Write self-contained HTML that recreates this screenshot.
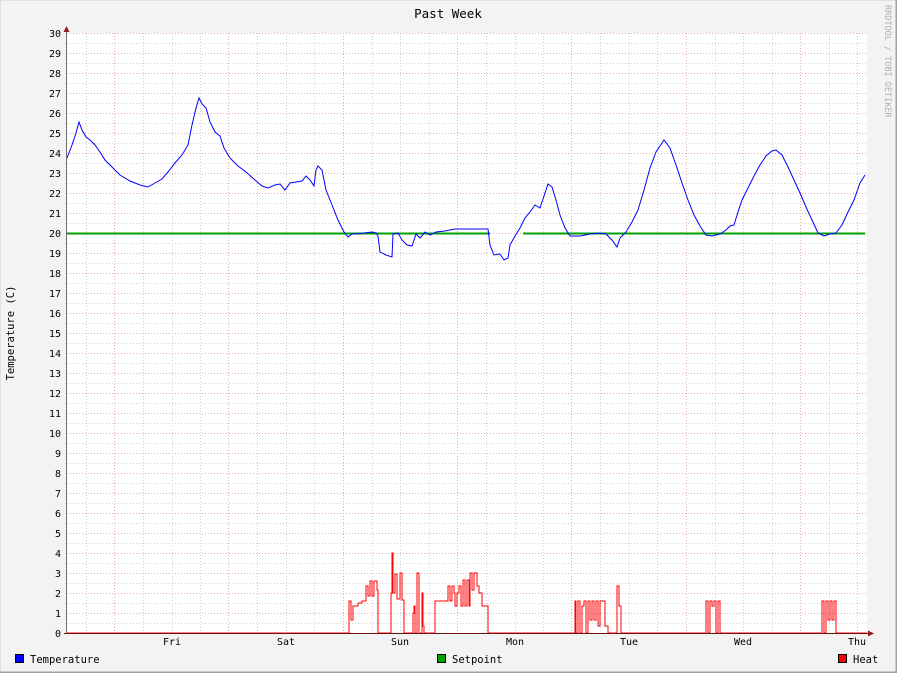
<!DOCTYPE html>
<html><head><meta charset="utf-8"><style>
html,body{margin:0;padding:0;background:#f3f3f3}
svg{display:block}
text{font-family:"DejaVu Sans Mono","Liberation Mono",monospace;fill:#000}
</style></head><body>
<svg width="897" height="673" viewBox="0 0 897 673" xmlns="http://www.w3.org/2000/svg">
<rect x="0" y="0" width="897" height="673" fill="#f3f3f3"/>
<rect x="0" y="0" width="897" height="673" fill="none" stroke="#cfcfcf" stroke-width="1"/>
<path d="M0,672.5H897M896.5,0V673" stroke="#a0a0a0" stroke-width="2"/>
<rect x="67" y="33" width="800" height="600" fill="#fff"/>
<g shape-rendering="crispEdges">
<path stroke="#d0d0d0" stroke-width="1" stroke-dasharray="1,2" d="M67,43.5H867M67,63.5H867M67,83.5H867M67,103.5H867M67,123.5H867M67,143.5H867M67,163.5H867M67,183.5H867M67,203.5H867M67,223.5H867M67,243.5H867M67,263.5H867M67,283.5H867M67,303.5H867M67,323.5H867M67,343.5H867M67,363.5H867M67,383.5H867M67,403.5H867M67,423.5H867M67,443.5H867M67,463.5H867M67,483.5H867M67,503.5H867M67,523.5H867M67,543.5H867M67,563.5H867M67,583.5H867M67,603.5H867M67,623.5H867
M86.5,33V633M143.5,33V633M172.5,33V633M200.5,33V633M257.5,33V633M286.5,33V633M314.5,33V633M372.5,33V633M400.5,33V633M429.5,33V633M486.5,33V633M515.5,33V633M543.5,33V633M600.5,33V633M629.5,33V633M657.5,33V633M715.5,33V633M743.5,33V633M772.5,33V633M829.5,33V633M857.5,33V633"/>
<path stroke="#e0b0b0" stroke-width="1" stroke-dasharray="1,2" d="M67,33.5H867M67,53.5H867M67,73.5H867M67,93.5H867M67,113.5H867M67,133.5H867M67,153.5H867M67,173.5H867M67,193.5H867M67,213.5H867M67,233.5H867M67,253.5H867M67,273.5H867M67,293.5H867M67,313.5H867M67,333.5H867M67,353.5H867M67,373.5H867M67,393.5H867M67,413.5H867M67,433.5H867M67,453.5H867M67,473.5H867M67,493.5H867M67,513.5H867M67,533.5H867M67,553.5H867M67,573.5H867M67,593.5H867M67,613.5H867
M114.5,33V633M228.5,33V633M343.5,33V633M457.5,33V633M571.5,33V633M686.5,33V633M800.5,33V633"/>
<path fill="none" stroke="#ff0000" stroke-width="1" d="M67,633H349V601H351V620H353V606H358V603H362V601H366V586H368V596H370V581H372V596H374V581H377V590H378V633H391V593H392V553H393V593H395V574H397V599H400V573H402V600H404V633H413V613H414V606H415V633H417V573H419V633H422V593H423V626H424V633H435V601H448V586H450V601H452V586H454V593H455V606H457V593H459V586H461V606H463V580H465V606H467V580H469V606H470V573H472V590H474V573H477V586H479V593H482V606H488V633H575V601H576V633H578V601H580V633H582V606H584V601H586V633H588V601H590V620H592V601H594V620H596V601H598V626H600V601H605V626H608V633H617V586H619V606H621V633H706V601H708V633H710V601H712V606H714V601H716V633H718V601H720V633H822V601H824V633H826V601H828V620H830V601H832V620H834V601H836V633H867"/>
<path fill="none" stroke="#00a000" stroke-width="2" d="M67,233.5H490M523,233.5H865"/>
</g>
<polyline fill="none" stroke="#0000ff" stroke-width="1" points="67,158 72,145 76,133 79,122 82,130 86,137 90,140 95,145 100,152 105,160 112,167 120,175 130,181 140,185 148,187 155,183 162,179 168,172 175,163 182,155 188,145 192,125 196,108 199,98 202,104 206,108 210,122 215,132 220,136 224,148 230,158 238,166 246,172 255,180 262,186 268,188 275,185 280,184 285,190 290,183 296,182 302,181 306,176 310,180 314,186 316,170 318,166 322,170 326,190 332,205 338,220 344,232 348,237 352,234 356,234 372,232 376,233 378,236 380,252 386,255 392,257 393,234 398,233 402,240 407,245 412,246 416,234 420,238 425,232 430,235 436,232 445,231 455,229 470,229 488,229 490,245 494,255 500,254 504,260 508,258 510,245 515,236 520,228 525,218 530,212 535,205 540,208 544,196 548,184 552,187 556,200 560,215 565,228 570,236 580,236 590,234 600,233 606,234 612,240 617,247 620,238 626,232 632,222 638,210 644,190 650,168 656,152 664,140 670,148 676,165 682,183 688,200 694,215 700,226 706,235 712,236 720,234 726,230 730,226 734,225 738,212 742,200 748,188 754,176 760,165 766,156 772,151 776,150 782,155 788,167 794,180 800,193 806,207 812,220 818,233 824,236 830,234 836,233 842,225 848,212 854,200 860,183 865,175"/>
<g shape-rendering="crispEdges">
<path stroke="#707070" stroke-width="1" d="M66.5,30V634"/>
<path stroke="#701010" stroke-width="1" d="M64,633.5H870"/>
</g>
<path fill="#902020" d="M66.5,26L63.5,32H69.5Z M874,633.5L868,630.5V636.5Z"/>
<g font-size="10" text-anchor="end">
<text x="61" y="37">30</text><text x="61" y="57">29</text><text x="61" y="77">28</text><text x="61" y="97">27</text><text x="61" y="117">26</text><text x="61" y="137">25</text><text x="61" y="157">24</text><text x="61" y="177">23</text><text x="61" y="197">22</text><text x="61" y="217">21</text><text x="61" y="237">20</text><text x="61" y="257">19</text><text x="61" y="277">18</text><text x="61" y="297">17</text><text x="61" y="317">16</text><text x="61" y="337">15</text><text x="61" y="357">14</text><text x="61" y="377">13</text><text x="61" y="397">12</text><text x="61" y="417">11</text><text x="61" y="437">10</text><text x="61" y="457">9</text><text x="61" y="477">8</text><text x="61" y="497">7</text><text x="61" y="517">6</text><text x="61" y="537">5</text><text x="61" y="557">4</text><text x="61" y="577">3</text><text x="61" y="597">2</text><text x="61" y="617">1</text><text x="61" y="637">0</text>
</g>
<g font-size="10" text-anchor="middle">
<text x="172" y="645">Fri</text><text x="286" y="645">Sat</text><text x="400" y="645">Sun</text><text x="515" y="645">Mon</text><text x="629" y="645">Tue</text><text x="743" y="645">Wed</text><text x="857" y="645">Thu</text>
</g>
<text x="448" y="18" font-size="12.5" text-anchor="middle">Past Week</text>
<text transform="translate(14,333) rotate(-90)" font-size="10.5" text-anchor="middle">Temperature (C)</text>
<text transform="translate(885,5) rotate(90)" font-size="8.5" style="fill:#b0b0b0">RRDTOOL / TOBI OETIKER</text>
<g shape-rendering="crispEdges">
<rect x="15.5" y="654.5" width="8" height="8" fill="#0000ff" stroke="#000"/>
<rect x="437.5" y="654.5" width="8" height="8" fill="#00a000" stroke="#000"/>
<rect x="838.5" y="654.5" width="8" height="8" fill="#ff0000" stroke="#000"/>
</g>
<text x="30" y="663" font-size="10.5">Temperature</text>
<text x="452" y="663" font-size="10.5">Setpoint</text>
<text x="853" y="663" font-size="10.5">Heat</text>
</svg>
</body></html>
